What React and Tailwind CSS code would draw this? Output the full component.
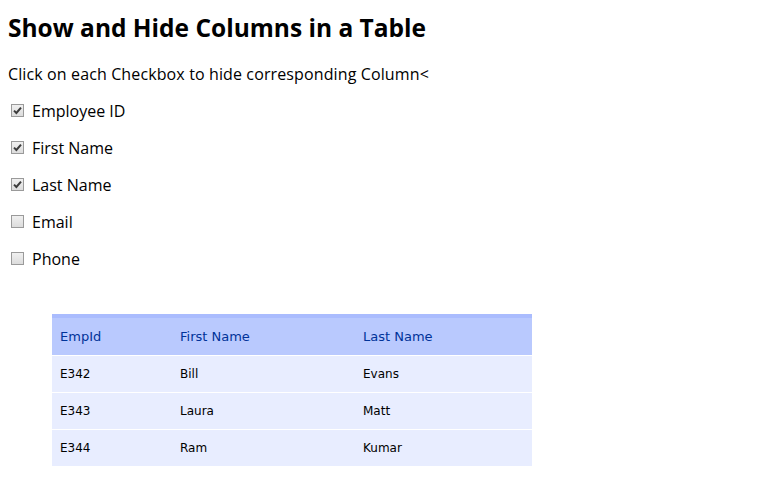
import React, { useState } from 'react';

const columns = [
  { key: 'id', label: 'Employee ID' },
  { key: 'first', label: 'First Name' },
  { key: 'last', label: 'Last Name' },
  { key: 'email', label: 'Email' },
  { key: 'phone', label: 'Phone' },
];

const rows = [
  { id: 'E342', first: 'Bill', last: 'Evans' },
  { id: 'E343', first: 'Laura', last: 'Matt' },
  { id: 'E344', first: 'Ram', last: 'Kumar' },
];

// Windows-style grey checkbox
const Box = ({ checked }) => (
  <span className="flex h-[13px] w-[13px] items-center justify-center border border-[#9a9a9a] bg-gradient-to-b from-[#f0f0f0] to-[#dcdcdc]">
    {checked && (
      <svg width="9" height="9" viewBox="0 0 9 9">
        <path d="M1 4.6 L3.4 7 L8 1.6" fill="none" stroke="#3c3c3c" strokeWidth="2" />
      </svg>
    )}
  </span>
);

export default function App() {
  const [checked, setChecked] = useState({ id: true, first: true, last: true, email: false, phone: false });

  const toggle = (key) => setChecked({ ...checked, [key]: !checked[key] });

  return (
    <div className="min-h-screen bg-white px-2 text-black">
      <h1 className="mt-[12px] text-[24.5px] font-bold leading-[32px] font-['Open_Sans','Noto_Sans',sans-serif]">
        Show and Hide Columns in a Table
      </h1>
      <p className="mt-[18px] text-[16px] tracking-[0.12px] leading-[24px] font-['Open_Sans','Noto_Sans',sans-serif]">
        Click on each Checkbox to hide corresponding Column&lt;
      </p>

      {/* Checkbox list */}
      <div className="mt-[6px] flex flex-col">
        {columns.map((c) => (
          <label
            key={c.key}
            onClick={() => toggle(c.key)}
            className="flex h-[37px] cursor-pointer items-center gap-[8px] pl-[3px] text-[16px] font-['Open_Sans','Noto_Sans',sans-serif]"
          >
            <Box checked={checked[c.key]} />
            <span>{c.label}</span>
          </label>
        ))}
      </div>

      {/* Table */}
      <table className="mt-[37px] ml-[44px] w-[480px] border-collapse text-left text-[12px] font-['DejaVu_Sans','Verdana',sans-serif]">
        <thead>
          <tr>
            <th className="w-[120px] border-t-4 border-b border-t-[#aabcfe] border-b-white bg-[#b9c9fe] px-2 py-2 text-[13px] font-normal leading-[21px] text-[#003399]">
              EmpId
            </th>
            <th className="w-[183px] border-t-4 border-b border-t-[#aabcfe] border-b-white bg-[#b9c9fe] px-2 py-2 text-[13px] font-normal leading-[21px] text-[#003399]">
              First Name
            </th>
            <th className="border-t-4 border-b border-t-[#aabcfe] border-b-white bg-[#b9c9fe] px-2 py-2 text-[13px] font-normal leading-[21px] text-[#003399]">
              Last Name
            </th>
          </tr>
        </thead>
        <tbody>
          {rows.map((r) => (
            <tr key={r.id}>
              <td className="border-b border-white bg-[#e8edff] px-2 py-2 leading-[20px] text-black">{r.id}</td>
              <td className="border-b border-white bg-[#e8edff] px-2 py-2 leading-[20px] text-black">{r.first}</td>
              <td className="border-b border-white bg-[#e8edff] px-2 py-2 leading-[20px] text-black">{r.last}</td>
            </tr>
          ))}
        </tbody>
      </table>
    </div>
  );
}
